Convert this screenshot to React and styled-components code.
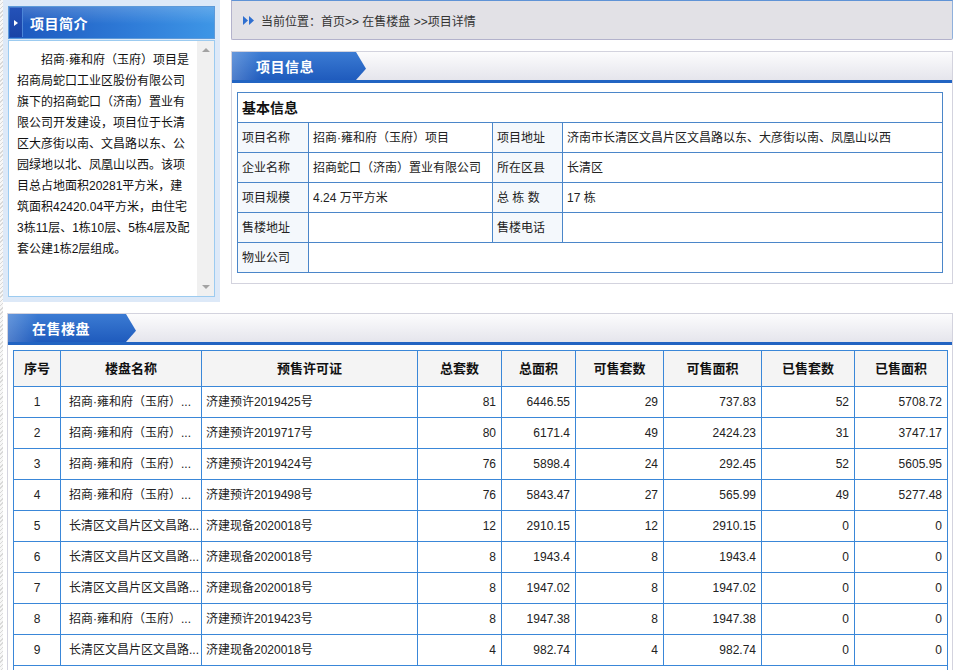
import React from 'react'
import styled, { createGlobalStyle } from 'styled-components'

const GlobalStyle = createGlobalStyle`
  html, body {
    margin: 0;
    padding: 0;
    background: #fff;
  }
  body {
    font-family: "Liberation Sans", "Noto Sans CJK SC", sans-serif;
    font-size: 12px;
    color: #222;
  }
`

const Page = styled.div`
  width: 960px;
  padding-left: 3px;
  box-sizing: border-box;
  background-image: repeating-linear-gradient(135deg, #d9d9d9 0 1px, #f7f7f7 1px 3px);
  background-size: 3px 100%;
  background-repeat: no-repeat;
  min-height: 670px;
`

const TopRow = styled.div`
  display: flex;
  align-items: flex-start;
  height: 302px;
`

const Sidebar = styled.div`
  width: 217px;
  height: 302px;
  box-sizing: border-box;
  padding: 6px 5px 5px 5px;
  background: #dde9f8;
  display: flex;
  flex-direction: column;
`

const SideHead = styled.div`
  height: 33px;
  box-sizing: border-box;
  border: 1px solid #fff;
  outline: 1px solid #5d9ad9;
  outline-offset: -1px;
  background:
    linear-gradient(to bottom, rgba(255,255,255,0.18), rgba(255,255,255,0) 55%),
    linear-gradient(to right, #1c56bd, #2f7cd8 60%, #3e96e6);
  display: flex;
  align-items: stretch;
  color: #fff;
  font-weight: bold;
  font-size: 14px;
`

const SideMark = styled.div`
  width: 12px;
  margin: 1px 0 1px 1px;
  background: linear-gradient(to bottom, #2452b8, #1a43a6);
  border-right: 1px solid #4c86d8;
  display: flex;
  align-items: center;
  justify-content: center;
  &::after {
    content: '';
    border-left: 4px solid #fff;
    border-top: 3px solid transparent;
    border-bottom: 3px solid transparent;
  }
`

const SideTitle = styled.div`
  display: flex;
  align-items: center;
  padding-left: 7px;
  letter-spacing: 0.5px;
`

const SideBody = styled.div`
  flex: 1;
  margin-top: 1px;
  border: 1px solid #9ccbf0;
  background: #fff;
  display: flex;
`

const SideText = styled.p`
  margin: 0;
  flex: 1;
  padding: 9px 5px 0 8px;
  line-height: 21px;
  font-size: 12px;
  text-indent: 2em;
  word-break: break-all;
  color: #111;
`

const ScrollTrack = styled.div`
  width: 17px;
  flex: none;
  background: #f0f0f0;
  display: flex;
  flex-direction: column;
  justify-content: space-between;
  align-items: center;
  padding: 7px 0;
  box-sizing: border-box;
`

const ScrollArrow = styled.span`
  width: 0;
  height: 0;
  border-left: 4px solid transparent;
  border-right: 4px solid transparent;
  ${p => (p.$down ? 'border-top: 4px solid #a3a3a3;' : 'border-bottom: 4px solid #a3a3a3;')}
`

const Main = styled.div`
  margin-left: 11px;
  width: 722px;
  display: flex;
  flex-direction: column;
  gap: 11px;
`

const Crumb = styled.div`
  height: 40px;
  box-sizing: border-box;
  background: #e2e1e6;
  border: 1px solid #b3b2cc;
  border-top-color: #5f93d6;
  border-right-color: #8fb0dc;
  border-radius: 0 0 2px 2px;
  display: flex;
  align-items: center;
  padding-left: 11px;
  gap: 6px;
  font-size: 12px;
  color: #333;
`

const Panel = styled.div`
  border: 1px solid #d3d3de;
  background: #fff;
  box-sizing: border-box;
`

const PanelHead = styled.div`
  height: 28px;
  background: linear-gradient(to bottom, #fcfcfd, #e5e5ec);
  border-bottom: 3px solid #2264c2;
  display: flex;
`

const Tab = styled.div`
  width: ${p => p.$w}px;
  background:
    linear-gradient(to right, rgba(255,255,255,0.22), rgba(255,255,255,0) 30px),
    linear-gradient(to bottom, #3b7bd3, #1f5bbd);
  clip-path: polygon(0 0, calc(100% - 10px) 0, 100% 60%, calc(100% - 10px) 100%, 0 100%);
  color: #fff;
  font-weight: bold;
  font-size: 14px;
  display: flex;
  align-items: center;
  padding-left: ${p => p.$pad}px;
  box-sizing: border-box;
  letter-spacing: 0.5px;
`

const InfoBody = styled.div`
  padding: 9px 9px 10px 5px;
`

const InfoTable = styled.table`
  width: 100%;
  border-collapse: collapse;
  table-layout: fixed;
  font-size: 12px;
  td {
    border: 1px solid #4b86c9;
    height: 29px;
    line-height: 16px;
    padding: 0 4px;
    white-space: nowrap;
    overflow: hidden;
    color: #222;
  }
`

const InfoCaption = styled.td`
  font-size: 14px;
  font-weight: bold;
  color: #111 !important;
`

const Label = styled.td`
  background: #f4f8fc;
`

const SalePanel = styled(Panel)`
  margin: 11px 0 0 4px;
  width: 946px;
`

const SaleBody = styled.div`
  padding: 5px 5px 0 5px;
`

const SaleTable = styled.table`
  width: 100%;
  border-collapse: collapse;
  table-layout: fixed;
  font-size: 12px;
  th, td {
    border: 1px solid #3a87d8;
    white-space: nowrap;
    overflow: hidden;
    line-height: 16px;
    padding-top: 0;
    padding-bottom: 0;
  }
  th {
    height: 35px;
    background: #f4f4f4;
    font-size: 13px;
    font-weight: bold;
    color: #111;
  }
  td {
    height: 30px;
    color: #222;
  }
`

const Cell = styled.td`
  text-align: ${p => p.$align || 'left'};
  padding-left: ${p => (p.$align ? 0 : p.$pl || 4)}px;
  padding-right: ${p => (p.$align === 'right' ? 5 : 0)}px;
`

const FootCell = styled.td`
  border-bottom: none !important;
`

const CrumbIcon = () => (
  <svg width="12" height="9" viewBox="0 0 12 9">
    <polygon points="0,0 5,4.5 0,9" fill="#2f6fd0" />
    <polygon points="6,0 11,4.5 6,9" fill="#2f6fd0" />
  </svg>
)

const intro =
  '招商·雍和府（玉府）项目是招商局蛇口工业区股份有限公司旗下的招商蛇口（济南）置业有限公司开发建设，项目位于长清区大彦街以南、文昌路以东、公园绿地以北、凤凰山以西。该项目总占地面积20281平方米，建筑面积42420.04平方米，由住宅3栋11层、1栋10层、5栋4层及配套公建1栋2层组成。'

const nameA = '招商·雍和府（玉府）...'
const nameB = '长清区文昌片区文昌路...'

const rows = [
  [1, nameA, '济建预许2019425号', 81, '6446.55', 29, '737.83', 52, '5708.72'],
  [2, nameA, '济建预许2019717号', 80, '6171.4', 49, '2424.23', 31, '3747.17'],
  [3, nameA, '济建预许2019424号', 76, '5898.4', 24, '292.45', 52, '5605.95'],
  [4, nameA, '济建预许2019498号', 76, '5843.47', 27, '565.99', 49, '5277.48'],
  [5, nameB, '济建现备2020018号', 12, '2910.15', 12, '2910.15', 0, '0'],
  [6, nameB, '济建现备2020018号', 8, '1943.4', 8, '1943.4', 0, '0'],
  [7, nameB, '济建现备2020018号', 8, '1947.02', 8, '1947.02', 0, '0'],
  [8, nameA, '济建预许2019423号', 8, '1947.38', 8, '1947.38', 0, '0'],
  [9, nameB, '济建现备2020018号', 4, '982.74', 4, '982.74', 0, '0'],
]

const colWidths = [47, 141, 216, 84, 74, 88, 98, 93, 93]
const heads = ['序号', '楼盘名称', '预售许可证', '总套数', '总面积', '可售套数', '可售面积', '已售套数', '已售面积']

function App() {
  return (
    <>
      <GlobalStyle />
      <Page>
        <TopRow>
          <Sidebar>
            <SideHead>
              <SideMark />
              <SideTitle>项目简介</SideTitle>
            </SideHead>
            <SideBody>
              <SideText>{intro}</SideText>
              <ScrollTrack>
                <ScrollArrow />
                <ScrollArrow $down />
              </ScrollTrack>
            </SideBody>
          </Sidebar>

          <Main>
            <Crumb>
              <CrumbIcon />
              <span>当前位置：首页&gt;&gt; 在售楼盘 &gt;&gt;项目详情</span>
            </Crumb>

            <Panel>
              <PanelHead>
                <Tab $w={134} $pad={24}>项目信息</Tab>
              </PanelHead>
              <InfoBody>
                <InfoTable>
                  <colgroup>
                    <col style={{ width: 71 }} />
                    <col style={{ width: 184 }} />
                    <col style={{ width: 70 }} />
                    <col />
                  </colgroup>
                  <tbody>
                    <tr>
                      <InfoCaption colSpan={4}>基本信息</InfoCaption>
                    </tr>
                    <tr>
                      <Label>项目名称</Label>
                      <td>招商·雍和府（玉府）项目</td>
                      <Label>项目地址</Label>
                      <td>济南市长清区文昌片区文昌路以东、大彦街以南、凤凰山以西</td>
                    </tr>
                    <tr>
                      <Label>企业名称</Label>
                      <td>招商蛇口（济南）置业有限公司</td>
                      <Label>所在区县</Label>
                      <td>长清区</td>
                    </tr>
                    <tr>
                      <Label>项目规模</Label>
                      <td>4.24 万平方米</td>
                      <Label>总 栋 数</Label>
                      <td>17 栋</td>
                    </tr>
                    <tr>
                      <Label>售楼地址</Label>
                      <td></td>
                      <Label>售楼电话</Label>
                      <td></td>
                    </tr>
                    <tr>
                      <Label>物业公司</Label>
                      <td colSpan={3}></td>
                    </tr>
                  </tbody>
                </InfoTable>
              </InfoBody>
            </Panel>
          </Main>
        </TopRow>

        <SalePanel>
          <PanelHead>
            <Tab $w={128} $pad={24}>在售楼盘</Tab>
          </PanelHead>
          <SaleBody>
            <SaleTable>
              <colgroup>
                {colWidths.map((w, i) => (
                  <col key={i} style={{ width: w }} />
                ))}
              </colgroup>
              <thead>
                <tr>
                  {heads.map(h => (
                    <th key={h}>{h}</th>
                  ))}
                </tr>
              </thead>
              <tbody>
                {rows.map(r => (
                  <tr key={r[0]}>
                    <Cell $align="center">{r[0]}</Cell>
                    <Cell $pl={8}>{r[1]}</Cell>
                    <Cell>{r[2]}</Cell>
                    {r.slice(3).map((v, i) => (
                      <Cell key={i} $align="right">{v}</Cell>
                    ))}
                  </tr>
                ))}
                <tr>
                  <FootCell colSpan={9}></FootCell>
                </tr>
              </tbody>
            </SaleTable>
          </SaleBody>
        </SalePanel>
      </Page>
    </>
  )
}

export default App
